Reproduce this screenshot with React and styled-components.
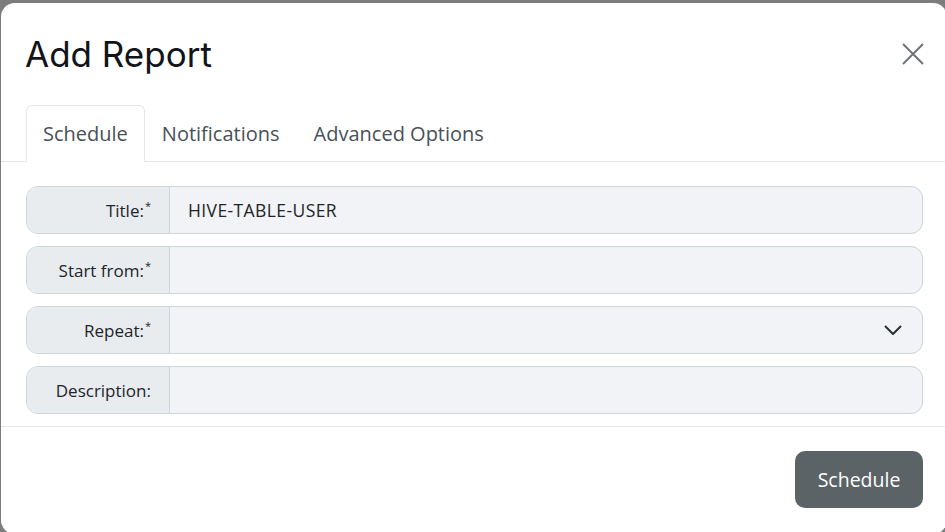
import styled, { createGlobalStyle } from "styled-components";
import { useState } from "react";

const GlobalStyle = createGlobalStyle`
  html, body {
    margin: 0;
    padding: 0;
    background: #7d7d7d;
    overflow: hidden;
  }
  * { box-sizing: border-box; }
`;

const Backdrop = styled.div`
  height: 532px;
  padding: 3px 0 0 1px;
`;

const Modal = styled.div`
  width: 946px;
  height: 531px;
  background: #fff;
  border-radius: 14px;
  display: flex;
  flex-direction: column;
  font-family: "Open Sans", "Noto Sans", sans-serif;
  color: #212529;
`;

const Header = styled.div`
  height: 102px;
  display: flex;
  align-items: center;
  justify-content: space-between;
  padding: 0 22px 0 24px;
`;

const Title = styled.h2`
  margin: 0;
  font-family: Inter, sans-serif;
  font-weight: 400;
  font-size: 35px;
  color: #111418;
`;

const CloseButton = styled.button`
  border: 0;
  background: none;
  padding: 0;
  width: 24px;
  height: 24px;
  display: flex;
  align-items: center;
  justify-content: center;
  cursor: pointer;
`;

const Tabs = styled.div`
  display: flex;
  padding-left: 25px;
  border-bottom: 1px solid #e3e6ea;
`;

const Tab = styled.button`
  height: 57px;
  margin-bottom: -1px;
  padding: 0 16px;
  font-family: inherit;
  font-size: 20px;
  color: #495057;
  background: ${(p) => (p.$active ? "#fff" : "transparent")};
  border: 1px solid ${(p) => (p.$active ? "#e3e6ea" : "transparent")};
  border-bottom-color: ${(p) => (p.$active ? "#fff" : "transparent")};
  border-radius: 6px 6px 0 0;
  cursor: pointer;
`;

const Body = styled.div`
  display: flex;
  flex-direction: column;
  gap: 12px;
  padding: 24px 24px 12px 25px;
  border-bottom: 1px solid #e3e6ea;
`;

const Field = styled.div`
  display: flex;
  height: 48px;
  border: 1px solid #ced4da;
  border-radius: 12px;
  overflow: hidden;
  background: #f1f3f6;
`;

const Label = styled.label`
  width: 143px;
  flex-shrink: 0;
  display: flex;
  align-items: center;
  justify-content: flex-end;
  padding-right: 18px;
  background: #e9ecef;
  border-right: 1px solid #ced4da;
  font-size: 17px;
  color: #212529;

  sup {
    font-size: 11px;
    margin-left: 1px;
    align-self: flex-start;
    margin-top: 11px;
  }
`;

const Input = styled.input`
  flex: 1;
  border: 0;
  background: transparent;
  padding: 0 18px;
  font-family: inherit;
  font-size: 17.5px;
  letter-spacing: 0.4px;
  color: #212529;
  outline: none;
`;

const Select = styled.div`
  flex: 1;
  display: flex;
  align-items: center;
  justify-content: flex-end;
  padding-right: 20px;
`;

const Footer = styled.div`
  display: flex;
  justify-content: flex-end;
  padding: 24px 24px 0;
`;

const SubmitButton = styled.button`
  width: 128px;
  height: 57px;
  border: 0;
  border-radius: 10px;
  background: #5c6366;
  color: #fff;
  font-family: inherit;
  font-size: 19.5px;
  cursor: pointer;
`;

const tabs = ["Schedule", "Notifications", "Advanced Options"];

function Required({ children }) {
  return (
    <Label>
      {children}
      <sup>*</sup>
    </Label>
  );
}

export default function App() {
  const [tab, setTab] = useState("Schedule");
  const [title, setTitle] = useState("HIVE-TABLE-USER");

  return (
    <>
      <GlobalStyle />
      <Backdrop>
        <Modal>
          <Header>
            <Title>Add Report</Title>
            <CloseButton aria-label="Close">
              <svg width="22" height="22" viewBox="0 0 22 22">
                <path
                  d="M1 1L21 21M21 1L1 21"
                  stroke="#6f7479"
                  strokeWidth="2"
                  fill="none"
                />
              </svg>
            </CloseButton>
          </Header>

          <Tabs>
            {tabs.map((t) => (
              <Tab key={t} $active={t === tab} onClick={() => setTab(t)}>
                {t}
              </Tab>
            ))}
          </Tabs>

          <Body>
            <Field>
              <Required>Title:</Required>
              <Input value={title} onChange={(e) => setTitle(e.target.value)} />
            </Field>
            <Field>
              <Required>Start from:</Required>
              <Input />
            </Field>
            <Field>
              <Required>Repeat:</Required>
              <Select>
                <svg width="18" height="11" viewBox="0 0 18 11">
                  <path
                    d="M1.5 1.5L9 9L16.5 1.5"
                    stroke="#2b3035"
                    strokeWidth="2"
                    strokeLinecap="round"
                    strokeLinejoin="round"
                    fill="none"
                  />
                </svg>
              </Select>
            </Field>
            <Field>
              <Label>Description:</Label>
              <Input />
            </Field>
          </Body>

          <Footer>
            <SubmitButton>Schedule</SubmitButton>
          </Footer>
        </Modal>
      </Backdrop>
    </>
  );
}
